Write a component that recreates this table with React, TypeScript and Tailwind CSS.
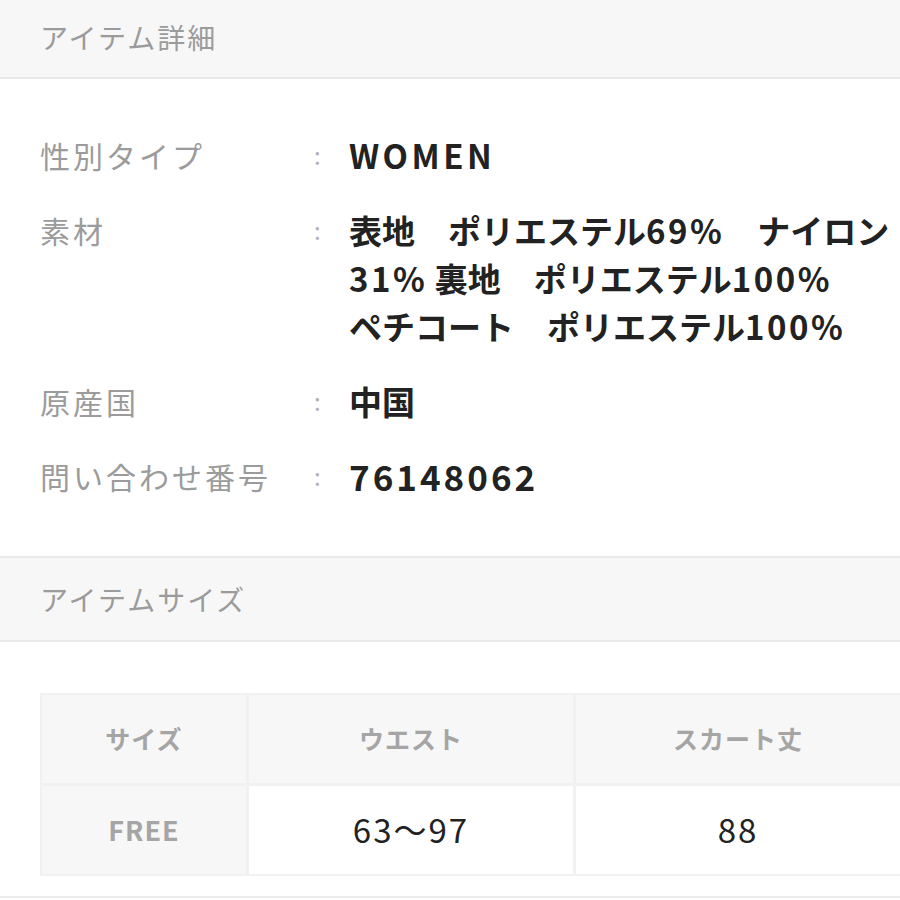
import React from "react";

const font = { fontFamily: '"Noto Sans CJK JP", "Noto Sans", sans-serif' };

function L({ children, t = "tracking-[2.5px]" }: { children: React.ReactNode; t?: string }) {
  return <span className={t}>{children}</span>;
}

function Row({ label, children }: { label: string; children: React.ReactNode }) {
  return (
    <div className="flex">
      <div className="w-[314px] shrink-0 pl-[40px] text-[30px] leading-[48px] tracking-[3px] text-[#9b9b9b]">
        {label}
      </div>
      <div className="w-[35px] shrink-0 text-[24px] leading-[48px] text-[#b0b0b0]">:</div>
      <div className="text-[33px] font-bold leading-[48px] text-[#222]">
        {children}
      </div>
    </div>
  );
}

export default function App() {
  return (
    <div className="w-[900px] h-[900px] overflow-hidden bg-white" style={font}>
      <div className="h-[79px] bg-[#f7f7f7] border-b-2 border-[#e9e9e9] flex items-center pb-[4px] pl-[40px] text-[28px] tracking-[2px] text-[#9b9b9b]">
        アイテム詳細
      </div>
      <div className="pt-[52px] pb-[55px] flex flex-col gap-[27px]">
        <Row label="性別タイプ"><L t="tracking-[3.5px]">WOMEN</L></Row>
        <Row label="素材">
          <div>表地　ポリエステル<L>69%</L>　ナイロン</div>
          <div><L>31%</L> 裏地　ポリエステル<L>100%</L></div>
          <div>ペチコート　ポリエステル<L>100%</L></div>
        </Row>
        <Row label="原産国">中国</Row>
        <Row label="問い合わせ番号"><L t="tracking-[3px] text-[35px]">76148062</L></Row>
      </div>
      <div className="h-[86px] bg-[#f7f7f7] border-y-2 border-[#e9e9e9] flex items-center pl-[40px] text-[28px] tracking-[2px] text-[#9b9b9b]">
        アイテムサイズ
      </div>
      <div className="pt-[51px]">
        <div className="ml-[40px] w-[864px] bg-[#f1f1f1] p-[2px] grid grid-cols-[204px_324px_324px] grid-rows-[88px_88px] gap-[3px]">
          <div className="bg-[#f7f7f7] flex items-center justify-center text-[25px] font-bold text-[#a5a5a5] tracking-[1px]">サイズ</div>
          <div className="bg-[#f7f7f7] flex items-center justify-center text-[25px] font-bold text-[#a5a5a5] tracking-[1px]">ウエスト</div>
          <div className="bg-[#f7f7f7] flex items-center justify-center text-[25px] font-bold text-[#a5a5a5] tracking-[1px]">スカート丈</div>
          <div className="bg-[#f7f7f7] flex items-center justify-center text-[27px] font-bold text-[#a5a5a5] tracking-[1px]">FREE</div>
          <div className="bg-white flex items-center justify-center text-[33px] text-[#222] tracking-[2px]">63〜97</div>
          <div className="bg-white flex items-center justify-center text-[33px] text-[#222] tracking-[2px]">88</div>
        </div>
        <div className="mt-[20px] border-t-2 border-[#ececec]" />
      </div>
    </div>
  );
}
